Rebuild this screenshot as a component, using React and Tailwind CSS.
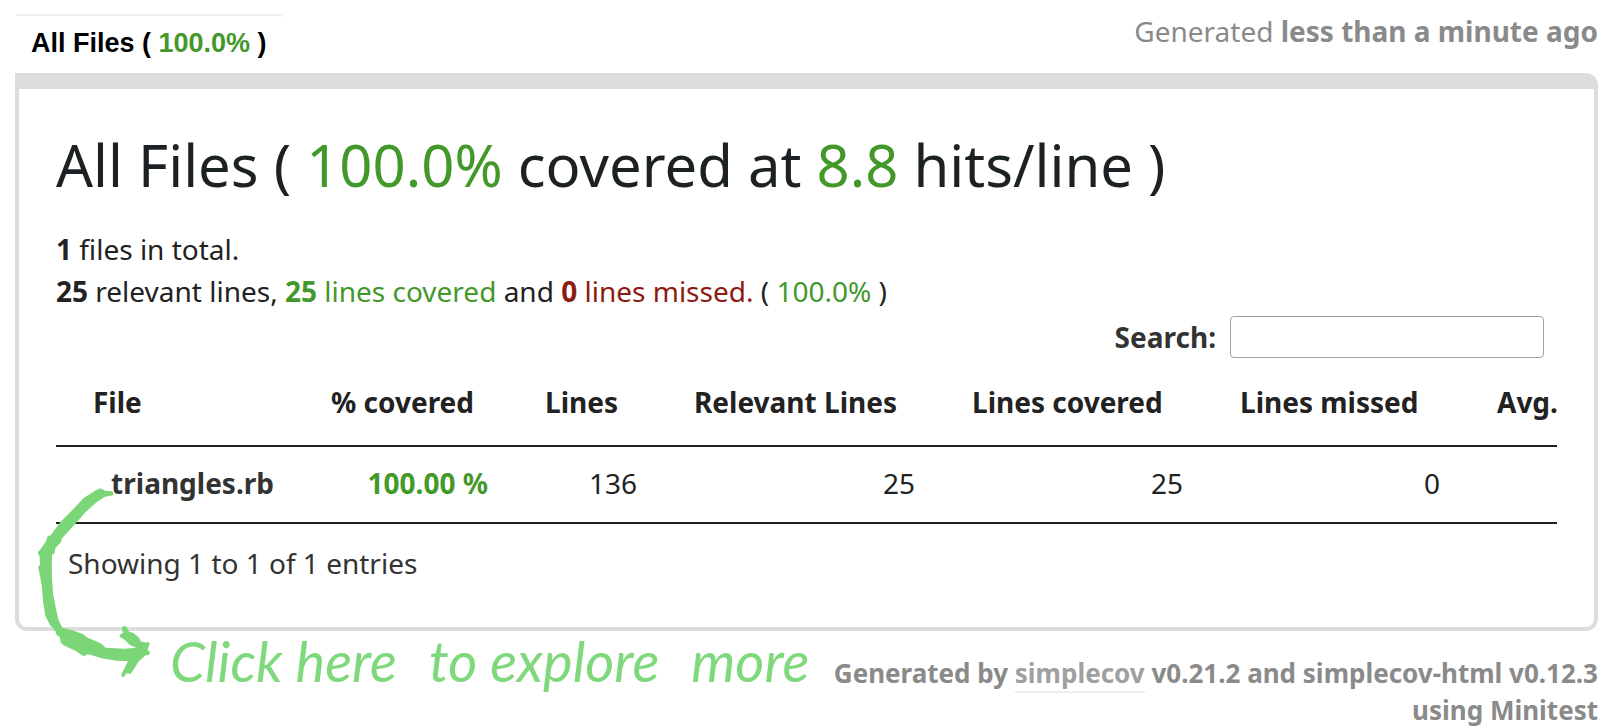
const columns = [
  { label: '% covered', value: '100.00 %', strong: true },
  { label: 'Lines', value: '136' },
  { label: 'Relevant Lines', value: '25' },
  { label: 'Lines covered', value: '25' },
  { label: 'Lines missed', value: '0' },
];

function Arrow() {
  return (
    <svg
      aria-hidden="true"
      viewBox="100 80 360 580"
      className="pointer-events-none absolute -bottom-12 left-[18px] h-[193px] w-[120px] fill-[#7ad677]"
    >
      <path d="M286 94 L303 87 L316 94 L336 96 Q345 101 340 108 L329 110 L316 112 L289 130 L258 158 L231 189 L207 215 L187 237 L184 248 L167 267 L164 283 L157 286 L156 321 L157 360 L160 405 L168 445 L176 482 L188 506 L212 512 L248 524 L263 535 L306 554 L318 566 L374 569 L410 566 L391 558 L374 541 L361 534 L360 527 L370 522 L366 505 Q374 496 382 505 L388 517 L402 522 L419 537 L424 547 L440 550 Q449 547 450 555 L444 572 Q457 582 447 588 L438 589 L418 607 L393 645 L381 642 L373 654 Q361 655 367 643 L385 606 L350 605 L306 598 L264 585 L252 592 L228 576 L194 560 L183 550 L180 534 L170 527 L168 518 L150 496 L137 471 L131 435 L126 380 L119 342 L115 325 L121 316 L119 288 Q109 281 120 273 L139 246 L144 230 L153 228 L182 188 L221 149 L252 116 Z" />
    </svg>
  );
}

export default function App() {
  return (
    <div className="bg-white pl-[15px] font-['Noto_Sans',sans-serif] text-[28px] leading-[42px] text-[#222222]">
      <header className="flex h-[73px] items-start justify-between pt-[10px]">
        <nav className="mt-1 rounded-t border-t-2 border-[#f0f0f0] px-4 pt-1">
          <a href="#all" className="font-['Liberation_Sans',sans-serif] text-[27px] font-bold text-black">
            All Files ( <span className="text-[#43982a]">100.0%</span> )
          </a>
        </nav>
        <p className="text-[#8a8a8a]">
          Generated <b>less than a minute ago</b>
        </p>
      </header>

      <div className="relative">
        <main className="rounded-xl rounded-tl-none border-4 border-t-[16px] border-[#dddddd] px-[37px] pb-[43px]">
          <h1 className="pt-[34px] text-[58px] leading-[84px] text-[#1c2224]">
            All Files ( <span className="text-[#43982a]">100.0%</span> covered at{' '}
            <span className="text-[#43982a]">8.8</span> hits/line )
          </h1>
          <p className="mt-[21px]">
            <b>1</b> files in total.
          </p>
          <p>
            <b>25</b> relevant lines,{' '}
            <span className="text-[#43982a]">
              <b>25</b> lines covered
            </span>{' '}
            and{' '}
            <span className="text-[#8c1a11]">
              <b>0</b> lines missed.
            </span>{' '}
            ( <span className="text-[#43982a]">100.0%</span> )
          </p>

          <div className="mt-1 flex items-center justify-end gap-[14px] pr-[13px] text-[#333333]">
            <label htmlFor="search" className="font-bold">
              Search:
            </label>
            <input id="search" type="text" className="h-[42px] w-[314px] rounded border border-[#a0a0a0] bg-white px-2" />
          </div>

          <div className="overflow-hidden">
            <table className="w-full table-fixed border-collapse whitespace-nowrap">
              <colgroup>
                <col className="w-[238px]" />
                <col className="w-[214px]" />
                <col className="w-[149px]" />
                <col className="w-[278px]" />
                <col className="w-[268px]" />
                <col className="w-[257px]" />
                <col />
              </colgroup>
              <thead>
                <tr className="h-[88px] border-b-2 border-[#1c2020] text-left">
                  <th className="pl-[37px]">File</th>
                  {columns.map((c) => (
                    <th key={c.label} className="pl-[37px]">
                      {c.label}
                    </th>
                  ))}
                  <th className="pl-[37px]">Avg.</th>
                </tr>
              </thead>
              <tbody>
                <tr className="h-[77px] border-b-2 border-[#1c2020] text-right">
                  <td className="pr-5 pb-1">
                    <a href="#triangles" className="font-bold text-[#333333]">
                      triangles.rb
                    </a>
                  </td>
                  {columns.map((c) => (
                    <td key={c.label} className={c.strong ? 'pr-5 pb-1 font-bold text-[#43982a]' : 'pr-5 pb-1'}>
                      {c.value}
                    </td>
                  ))}
                  <td />
                </tr>
              </tbody>
            </table>
          </div>

          <p className="mt-[18px] pl-3 text-[#333333]">Showing 1 to 1 of 1 entries</p>
        </main>
        <Arrow />
      </div>

      <footer className="flex items-start justify-between">
        <p className="flex gap-8 pl-[155px] font-['Lato',sans-serif] text-[56px] leading-[60px] whitespace-nowrap text-[#80d87d] italic">
          <span>Click here</span>
          <span>to explore</span>
          <span>more</span>
        </p>
        <p className="w-[780px] shrink-0 pt-6 text-right text-[26px] leading-[37px] font-bold text-[#8a8a8a]">
          Generated by{' '}
          <a href="#simplecov" className="border-b-2 border-[#eeeeee] text-[#a0a0a0]">
            simplecov
          </a>{' '}
          v0.21.2 and simplecov-html v0.12.3 using Minitest
        </p>
      </footer>
    </div>
  );
}
